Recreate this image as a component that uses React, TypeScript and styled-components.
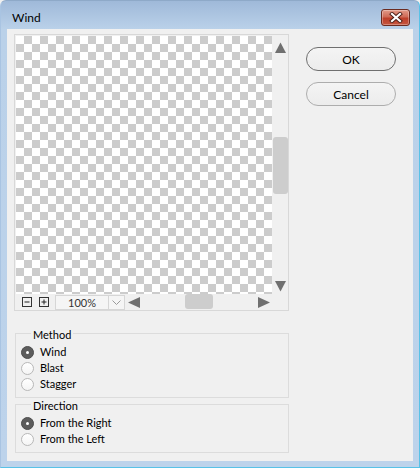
import React from "react";
import styled, { createGlobalStyle } from "styled-components";

const GlobalStyle = createGlobalStyle`
  html, body { margin: 0; padding: 0; background: #f0f0f0; }
  body { font-family: Lato, "Noto Sans", sans-serif; font-size: 11px; color: #000; }
  * { box-sizing: border-box; }
`;

const Window = styled.div`
  width: 420px;
  height: 468px;
  display: flex;
  flex-direction: column;
  background: linear-gradient(180deg, #9fb9d9 0px, #bad1e9 28px, #bdd3eb 100%);
  border: 1px solid #58c2e7;
  border-top-color: #8ea9c8;
  border-left-color: #a9c4e2;
  border-radius: 6px 6px 0 0;
  padding: 0 6px 6px 6px;
`;

const TitleBar = styled.div`
  height: 28px;
  flex: none;
  display: flex;
  align-items: center;
  justify-content: space-between;
  padding: 5px 3px 0 5px;
`;

const Title = styled.span`
  font-size: 12px;
  line-height: 14px;
  color: #000;
`;

const CloseButton = styled.div`
  width: 29px;
  height: 17px;
  border: 1px solid #6b2b20;
  border-radius: 3px;
  background: linear-gradient(180deg, #e29a88 0%, #cf6b57 45%, #bd3f2a 55%, #c5563f 100%);
  display: flex;
  align-items: center;
  justify-content: center;
  box-shadow: inset 0 0 0 1px rgba(255, 255, 255, 0.3);
`;

const Client = styled.div`
  flex: 1;
  background: #f0f0f0;
  display: flex;
  padding: 5px 0 0 7px;
`;

const LeftColumn = styled.div`
  width: 275px;
  display: flex;
  flex-direction: column;
`;

const Preview = styled.div`
  width: 275px;
  height: 277px;
  border: 1px solid #d8d8d8;
  background: #f0f0f0;
  display: grid;
  grid-template-columns: 257px 16px;
  grid-template-rows: 259px 16px;
`;

const Canvas = styled.div`
  padding: 1px 0 0 1px;
  background: repeating-conic-gradient(#cccccc 0 25%, #ffffff 0 50%) 0 0 / 16px 16px;
  background-origin: content-box;
  background-clip: content-box;
`;

const VScroll = styled.div`
  display: flex;
  flex-direction: column;
  align-items: center;
`;

const ArrowCell = styled.div<{ $h: number; $w?: number }>`
  height: ${(p) => p.$h}px;
  width: ${(p) => (p.$w ? `${p.$w}px` : "100%")};
  flex: none;
  display: flex;
  align-items: center;
  justify-content: center;
`;

const VThumb = styled.div`
  align-self: flex-end;
  width: 15px;
  height: 57px;
  margin-top: 78px;
  background: #cdcdcd;
  border-radius: 3px;
`;

const Spacer = styled.div`
  flex: 1;
`;

const BottomBar = styled.div`
  display: flex;
  align-items: center;
  padding-left: 7px;
`;

const ToolIcon = styled.div<{ $ml?: number }>`
  width: 10px;
  height: 10px;
  margin-left: ${(p) => p.$ml ?? 0}px;
  display: flex;
`;

const ZoomField = styled.div`
  margin-left: 6px;
  width: 70px;
  height: 15px;
  border: 1px solid #d6d6d6;
  background: #f5f5f5;
  display: flex;
`;

const ZoomValue = styled.div`
  width: 52px;
  font-size: 11px;
  line-height: 13px;
  text-align: center;
  color: #333;
`;

const ZoomDrop = styled.div`
  width: 16px;
  border-left: 1px solid #d6d6d6;
  display: flex;
  align-items: center;
  justify-content: center;
`;

const HScroll = styled.div`
  flex: 1;
  height: 16px;
  display: flex;
  align-items: center;
`;

const HThumb = styled.div`
  align-self: flex-start;
  width: 28px;
  height: 15px;
  margin-left: 42px;
  background: #cdcdcd;
  border-radius: 3px;
`;

const Corner = styled.div`
  background: #f0f0f0;
`;

const Groups = styled.div`
  margin-top: 22px;
  margin-left: 1px;
  display: flex;
  flex-direction: column;
  gap: 6px;
`;

const GroupBox = styled.div`
  position: relative;
  width: 274px;
  border: 1px solid #dcdcdc;
  padding: 10px 0 5px 5px;
`;

const GroupLabel = styled.span`
  position: absolute;
  top: -6px;
  left: 15px;
  padding: 0 2px;
  background: #f0f0f0;
  font-size: 11px;
  line-height: 14px;
  color: #000;
`;

const RadioRow = styled.div`
  height: 16px;
  display: flex;
  align-items: center;
  gap: 6px;
  font-size: 11px;
  line-height: 14px;
`;

const Radio = styled.span<{ $checked?: boolean }>`
  width: 13px;
  height: 13px;
  border-radius: 50%;
  flex: none;
  display: flex;
  align-items: center;
  justify-content: center;
  border: 1px solid ${(p) => (p.$checked ? "#4d4d4d" : "#b8b8b8")};
  background: ${(p) => (p.$checked ? "#5c5c5c" : "linear-gradient(180deg,#ffffff,#f4f4f4)")};
  &::after {
    content: "";
    display: ${(p) => (p.$checked ? "block" : "none")};
    width: 3px;
    height: 3px;
    border-radius: 50%;
    background: #ffffff;
  }
`;

const RightColumn = styled.div`
  margin-left: 17px;
  padding-top: 13px;
  display: flex;
  flex-direction: column;
  gap: 11px;
`;

const Button = styled.div<{ $default?: boolean }>`
  width: 90px;
  height: 24px;
  border-radius: 12px;
  border: 1px solid ${(p) => (p.$default ? "#6f6f6f" : "#adadad")};
  background: linear-gradient(180deg, #f4f4f4, #ececec);
  display: flex;
  align-items: center;
  justify-content: center;
  font-size: 12px;
  color: #000;
`;

const TriUp = () => (
  <svg width="11" height="11" viewBox="0 0 11 11">
    <polygon points="0,11 5.5,0.5 11,11" fill="#707070" />
  </svg>
);
const TriDown = () => (
  <svg width="11" height="11" viewBox="0 0 11 11">
    <polygon points="0,0 11,0 5.5,10.5" fill="#707070" />
  </svg>
);
const TriLeft = () => (
  <svg width="12" height="11" viewBox="0 0 12 11">
    <polygon points="0,5.5 12,0 12,11" fill="#707070" />
  </svg>
);
const TriRight = () => (
  <svg width="12" height="11" viewBox="0 0 12 11">
    <polygon points="0,0 12,5.5 0,11" fill="#707070" />
  </svg>
);

const BoxIcon = ({ plus }: { plus?: boolean }) => (
  <svg width="10" height="10" viewBox="0 0 10 10">
    <rect x="0.5" y="0.5" width="9" height="9" fill="none" stroke="#333" />
    <line x1="2.5" y1="5" x2="7.5" y2="5" stroke="#222" />
    {plus && <line x1="5" y1="2.5" x2="5" y2="7.5" stroke="#222" />}
  </svg>
);

const Chevron = () => (
  <svg width="9" height="5" viewBox="0 0 9 5">
    <polyline points="0.5,0.5 4.5,4.5 8.5,0.5" fill="none" stroke="#9a9a9a" />
  </svg>
);

const CloseX = () => (
  <svg width="14" height="11" viewBox="0 0 14 11">
    <path d="M3 2 L11 9 M11 2 L3 9" stroke="#4a1e16" strokeWidth="4" strokeLinecap="square" />
    <path d="M3 2 L11 9 M11 2 L3 9" stroke="#ffffff" strokeWidth="2.2" strokeLinecap="square" />
  </svg>
);

const methods = ["Wind", "Blast", "Stagger"];
const directions = ["From the Right", "From the Left"];

export default function App() {
  return (
    <>
      <GlobalStyle />
      <Window>
        <TitleBar>
          <Title>Wind</Title>
          <CloseButton>
            <CloseX />
          </CloseButton>
        </TitleBar>
        <Client>
          <LeftColumn>
            <Preview>
              <Canvas />
              <VScroll>
                <ArrowCell $h={24}>
                  <TriUp />
                </ArrowCell>
                <VThumb />
                <Spacer />
                <ArrowCell $h={16}>
                  <TriDown />
                </ArrowCell>
              </VScroll>
              <BottomBar>
                <ToolIcon>
                  <BoxIcon />
                </ToolIcon>
                <ToolIcon $ml={7}>
                  <BoxIcon plus />
                </ToolIcon>
                <ZoomField>
                  <ZoomValue>100%</ZoomValue>
                  <ZoomDrop>
                    <Chevron />
                  </ZoomDrop>
                </ZoomField>
                <HScroll>
                  <ArrowCell $h={16} $w={18}>
                    <TriLeft />
                  </ArrowCell>
                  <HThumb />
                  <Spacer />
                  <ArrowCell $h={16} $w={16}>
                    <TriRight />
                  </ArrowCell>
                </HScroll>
              </BottomBar>
              <Corner />
            </Preview>
            <Groups>
              <GroupBox>
                <GroupLabel>Method</GroupLabel>
                {methods.map((m, i) => (
                  <RadioRow key={m}>
                    <Radio $checked={i === 0} />
                    {m}
                  </RadioRow>
                ))}
              </GroupBox>
              <GroupBox>
                <GroupLabel>Direction</GroupLabel>
                {directions.map((d, i) => (
                  <RadioRow key={d}>
                    <Radio $checked={i === 0} />
                    {d}
                  </RadioRow>
                ))}
              </GroupBox>
            </Groups>
          </LeftColumn>
          <RightColumn>
            <Button $default>OK</Button>
            <Button>Cancel</Button>
          </RightColumn>
        </Client>
      </Window>
    </>
  );
}
